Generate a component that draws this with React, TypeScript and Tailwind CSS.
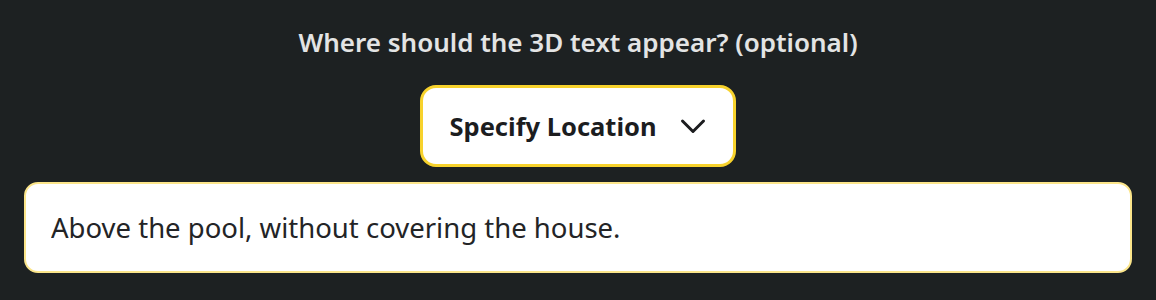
import React, { useState } from "react";

const App = (): React.JSX.Element => {
  const [location, setLocation] = useState<string>(
    "Above the pool, without covering the house."
  );

  return (
    <div
      className="bg-[#1d2122] h-[300px] w-full flex flex-col items-center px-6 pt-[27px]"
      style={{ fontFamily: '"Noto Sans", "Open Sans", sans-serif' }}
    >
      <p className="text-[#e3e4e4] text-[26px] font-semibold leading-[30px]">
        Where should the 3D text appear? (optional)
      </p>
      <button className="mt-[28px] h-[82px] w-[316px] bg-white border-[3px] border-[#f7d22c] rounded-[16px] flex items-center justify-center gap-[22px] text-[#1c1d1f] text-[25.5px] font-bold cursor-pointer">
        <span>Specify Location</span>
        <svg
          width="28"
          height="28"
          viewBox="0 0 28 28"
          fill="none"
          stroke="currentColor"
          strokeWidth="3"
          strokeLinecap="round"
          strokeLinejoin="round"
        >
          <path d="M3.5 9l10.5 10.5L24.5 9" />
        </svg>
      </button>
      <input
        className="mt-[15px] h-[91px] w-full bg-white border-2 border-[#fbe58a] rounded-[14px] px-[25px] text-[27.5px] text-[#232426] outline-none"
        value={location}
        onChange={(e) => setLocation(e.target.value)}
      />
    </div>
  );
};

export default App;
